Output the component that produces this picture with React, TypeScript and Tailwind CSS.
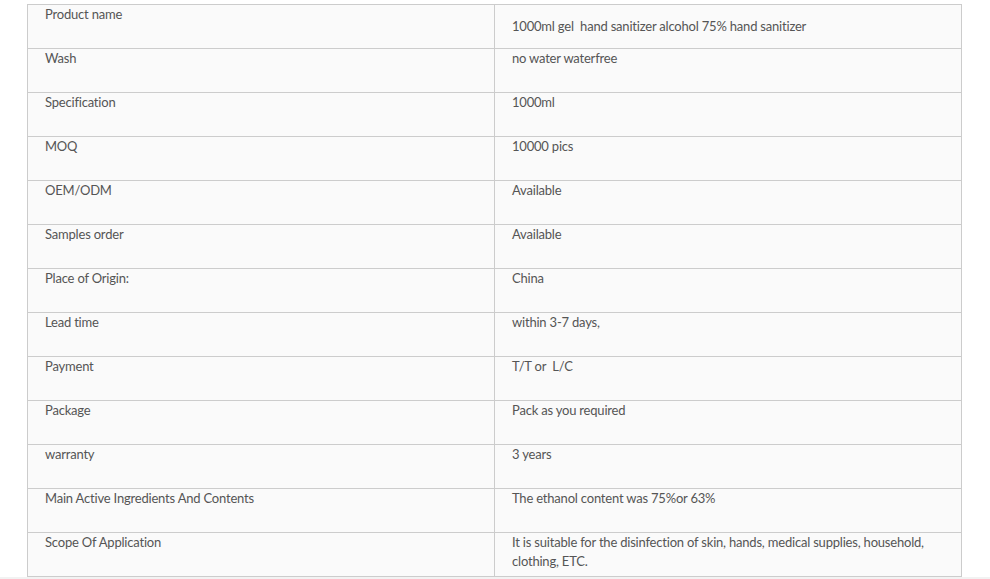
const rows: [string, string][] = [
  ["Product name", "1000ml gel\u00a0 hand sanitizer alcohol 75% hand sanitizer"],
  ["Wash", "no water waterfree"],
  ["Specification", "1000ml"],
  ["MOQ", "10000 pics"],
  ["OEM/ODM", "Available"],
  ["Samples order", "Available"],
  ["Place of Origin:", "China"],
  ["Lead time", "within 3-7 days,"],
  ["Payment", "T/T or\u00a0 L/C"],
  ["Package", "Pack as you required"],
  ["warranty", "3 years"],
  ["Main Active Ingredients And Contents", "The ethanol content was 75%or 63%"],
  [
    "Scope Of Application",
    "It is suitable for the disinfection of skin, hands, medical supplies, household, clothing, ETC.",
  ],
];

export default function App() {
  return (
    <div className="flex h-[579px] flex-col overflow-hidden bg-white font-['Lato',sans-serif] text-[13px] leading-[19px] tracking-[-0.2px] text-[#555]">
      <div className="pl-[27px] pr-[28px] pt-[4px]">
        <table className="w-full table-fixed border-collapse bg-[#fafafa]">
          <tbody>
            {rows.map(([label, value], i) => (
              <tr key={label} className="h-[44px]">
                <td className="border border-[#ccc] px-[17px] pt-0 align-top">
                  {label}
                </td>
                <td
                  className={`border border-[#ccc] px-[17px] align-top ${
                    i === 0 ? "pt-[12px]" : "pt-0"
                  }`}
                >
                  {value}
                </td>
              </tr>
            ))}
          </tbody>
        </table>
      </div>
      <div className="flex-1 bg-[#f2f2f2]" />
    </div>
  );
}
